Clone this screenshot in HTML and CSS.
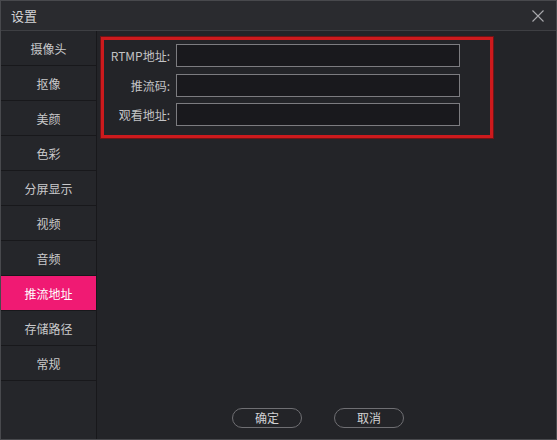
FILE: index.html
```html
<!DOCTYPE html>
<html lang="zh-CN">
<head>
    <meta charset="UTF-8">
    <meta name="viewport" content="width=device-width, initial-scale=1.0">
    <title>设置</title>
    <link rel="stylesheet" href="styles.css">
</head>
<body>
    <div class="window">
        <header class="titlebar">
            <span class="title">设置</span>
            <button class="close" aria-label="关闭">
                <svg width="12" height="12" viewBox="0 0 12 12">
                    <path d="M0.5 0.5 L11.5 11.5 M11.5 0.5 L0.5 11.5" stroke="#a9a9ad" stroke-width="1.1" fill="none"/>
                </svg>
            </button>
        </header>
        <div class="body">
            <nav class="sidebar">
                <div class="nav-item">摄像头</div>
                <div class="nav-item">抠像</div>
                <div class="nav-item">美颜</div>
                <div class="nav-item">色彩</div>
                <div class="nav-item">分屏显示</div>
                <div class="nav-item">视频</div>
                <div class="nav-item">音频</div>
                <div class="nav-item active">推流地址</div>
                <div class="nav-item">存储路径</div>
                <div class="nav-item">常规</div>
            </nav>
            <main class="content">
                <div class="panel">
                    <div class="row">
                        <label for="rtmp">RTMP地址:</label>
                        <input type="text" id="rtmp">
                    </div>
                    <div class="row">
                        <label for="key">推流码:</label>
                        <input type="text" id="key">
                    </div>
                    <div class="row">
                        <label for="watch">观看地址:</label>
                        <input type="text" id="watch">
                    </div>
                </div>
                <footer class="actions">
                    <button class="btn">确定</button>
                    <button class="btn">取消</button>
                </footer>
            </main>
        </div>
    </div>
</body>
</html>
```

FILE: styles.css
```css
* {
    box-sizing: border-box;
}
body {
    margin: 0;
    padding: 0;
    background-color: #232428;
    font-family: "Noto Sans CJK SC", "Liberation Sans", sans-serif;
    color: #c8c8ca;
}
.window {
    width: 557px;
    height: 440px;
    border: 1px solid #48494d;
    display: flex;
    flex-direction: column;
    background-color: #232428;
}
.titlebar {
    height: 30px;
    flex: none;
    display: flex;
    align-items: center;
    justify-content: space-between;
    padding: 0 10px 0 10px;
    background-color: #2a2b2f;
    border-bottom: 1px solid #3e3f43;
}
.title {
    font-size: 13px;
    color: #d4d4d6;
}
.close {
    background: none;
    border: none;
    padding: 0;
    width: 12px;
    height: 12px;
    margin-right: 2px;
    display: flex;
}
.body {
    flex: 1;
    display: flex;
    min-height: 0;
}
.sidebar {
    width: 96px;
    flex: none;
    background-color: #25262a;
    border-right: 1px solid #18181b;
}
.nav-item {
    height: 35px;
    display: flex;
    align-items: center;
    justify-content: center;
    font-size: 12px;
    border-bottom: 1px solid #18181b;
    color: #c9c9cb;
}
.nav-item.active {
    background-color: #f01a73;
    color: #fff;
}
.content {
    flex: 1;
    display: flex;
    flex-direction: column;
    padding: 6px 0 0 4px;
}
.panel {
    width: 392px;
    border: 3px solid #cc1a1d;
    box-shadow: 0 0 0 1px #6e1417;
    padding: 4px 30px 9px 0;
    display: flex;
    flex-direction: column;
    gap: 6.5px;
}
.row {
    display: flex;
    align-items: center;
    gap: 6px;
}
.row label {
    width: 66px;
    text-align: right;
    font-size: 12px;
    color: #c3c3c5;
}
.row input {
    width: 284px;
    height: 23px;
    background-color: #19191d;
    border: 1px solid #7c7c80;
    color: #ddd;
    outline: none;
    padding: 0 4px;
}
.actions {
    margin-top: auto;
    display: flex;
    justify-content: center;
    gap: 32px;
    padding: 0 21px 11px 0;
}
.btn {
    width: 70px;
    height: 20px;
    border: 1px solid #6f6f73;
    border-radius: 10px;
    background: transparent;
    color: #d2d2d4;
    font-family: "Noto Sans CJK SC", sans-serif;
    font-size: 12px;
    padding: 0;
    line-height: 18px;
}
```
